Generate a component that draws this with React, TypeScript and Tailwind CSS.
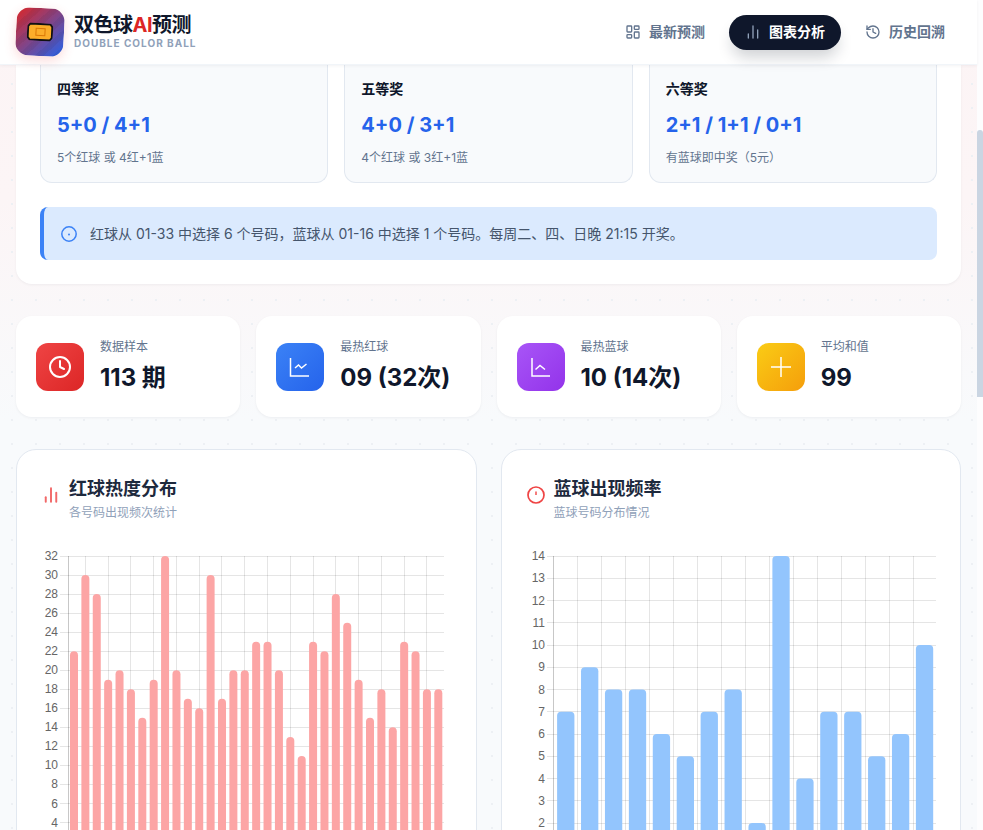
import { ChartNoAxesColumn, Clock, History, LayoutDashboard } from "lucide-react";

const FONT = "font-['Inter','Noto_Sans_CJK_SC',sans-serif]";

const redCounts = [22, 30, 28, 19, 20, 18, 15, 19, 32, 20, 17, 16, 30, 17, 20, 20, 23, 23, 20, 13, 11, 23, 22, 28, 25, 19, 15, 18, 14, 23, 22, 18, 18];
const blueCounts = [7, 9, 8, 8, 6, 5, 7, 8, 2, 14, 4, 7, 7, 5, 6, 10];

const prizes = [
	{ name: "四等奖", rule: "5+0 / 4+1", note: "5个红球 或 4红+1蓝" },
	{ name: "五等奖", rule: "4+0 / 3+1", note: "4个红球 或 3红+1蓝" },
	{ name: "六等奖", rule: "2+1 / 1+1 / 0+1", note: "有蓝球即中奖（5元）" },
];

type ChartProps = {
	counts: number[];
	color: string;
	left: number;
	right: number;
	barWidth: number;
	ticks: number[];
	max: number;
	unit: number;
	tickLeft: number;
	vLines: number[];
};

function BarChart({ counts, color, left, right, barWidth, ticks, max, unit, tickLeft, vLines }: ChartProps) {
	const top = 12;
	const slot = (right - left) / counts.length;
	const bottom = 340;
	const yOf = (v: number) => top + (max - v) * unit;
	return (
		<svg width="100%" height="330" className="block">
			{ticks.map((t) => (
				<g key={t}>
					<line x1={tickLeft} x2={right} y1={yOf(t)} y2={yOf(t)} stroke="rgba(0,0,0,0.1)" shapeRendering="crispEdges" />
					<text x={tickLeft - 2} y={yOf(t) + 4} textAnchor="end" fontSize="12" fill="#666" fontFamily="'Liberation Sans', Arial, sans-serif">
						{t}
					</text>
				</g>
			))}
			<line x1={left} x2={left} y1={top} y2={bottom} stroke="rgba(0,0,0,0.22)" shapeRendering="crispEdges" />
			{vLines.map((x) => (
				<line key={x} x1={x} x2={x} y1={top} y2={bottom} stroke="rgba(0,0,0,0.1)" shapeRendering="crispEdges" />
			))}
			{counts.map((v, i) => {
				const x = left + slot * i + (slot - barWidth) / 2;
				const y = yOf(v);
				const r = 4;
				return (
					<path
						key={i}
						d={`M${x} ${bottom}V${y + r}Q${x} ${y} ${x + r} ${y}H${x + barWidth - r}Q${x + barWidth} ${y} ${x + barWidth} ${y + r}V${bottom}Z`}
						fill={color}
					/>
				);
			})}
		</svg>
	);
}

function Stat({ label, value, box, icon }: { label: string; value: string; box: string; icon: React.ReactNode }) {
	return (
		<div className="flex items-center gap-4 rounded-2xl bg-white px-5 py-[21px] shadow-[0_1px_3px_rgba(15,23,42,0.05)]">
			<div className={`flex h-12 w-12 shrink-0 items-center justify-center rounded-xl ${box}`}>{icon}</div>
			<div className="mt-[2px]">
				<p className="text-xs leading-4 text-slate-500">{label}</p>
				<p className="mt-1 text-2xl leading-[37px] font-bold text-slate-900">{value}</p>
			</div>
		</div>
	);
}

function NavItem({ label, icon, active }: { label: string; icon: React.ReactNode; active?: boolean }) {
	return (
		<div
			className={
				active
					? "flex h-[35px] items-center gap-2 rounded-full bg-slate-900 px-4 text-sm font-bold text-white shadow-[0_10px_15px_-3px_rgba(15,23,42,0.2)]"
					: "flex h-[35px] items-center gap-2 rounded-full px-4 text-sm font-semibold text-slate-500"
			}
		>
			{icon}
			{label}
		</div>
	);
}

export default function App() {
	const leftLines = Array.from({ length: 16 }, (_, i) => 44.4 + 22.76 * i);
	const rightLines = Array.from({ length: 15 }, (_, i) => 51.8 + 24 * i);
	return (
		<div className={`flex h-[830px] overflow-hidden bg-white ${FONT}`}>
			<div className="flex min-w-0 flex-1 flex-col bg-[#f8fafc] [background-image:radial-gradient(#edf0f4_1px,transparent_1px),linear-gradient(180deg,#fcf4f5_0px,#fcf5f6_200px,#f8fafc_420px)] [background-size:24px_24px,100%_100%]">
				<header className="relative z-10 flex h-[65px] shrink-0 items-center justify-between border-b border-slate-100 bg-white px-4 shadow-[0_1px_3px_rgba(15,23,42,0.05)]">
					<div className="flex items-center gap-2.5">
						<div className="flex h-12 w-12 rotate-3 items-center justify-center rounded-[13px] shadow-[0_4px_12px_rgba(239,68,68,0.2)] [background-image:repeating-linear-gradient(135deg,rgba(0,0,0,0.05)_0px,rgba(0,0,0,0.05)_6px,transparent_6px,transparent_12px),linear-gradient(135deg,#dc2626,#2563eb)]">
							<svg width="26" height="18" viewBox="0 0 26 18">
								<path d="M3 1h20l2 2.500v11l-2 2.500H3l-2-2.500v-11Z" fill="#fbad2a" stroke="#111" strokeWidth="1.800" strokeLinejoin="round" />
								<rect x="9" y="5.500" width="9" height="7" fill="none" stroke="#d97706" strokeWidth="1" />
							</svg>
						</div>
						<div className="mb-[3px]">
							<p className="text-xl leading-6 font-bold tracking-tight text-slate-900">
								双色球<span className="text-[#dc2626]">AI</span>预测
							</p>
							<p className="text-[10px] leading-3 font-bold tracking-[0.1em] text-slate-400">DOUBLE COLOR BALL</p>
						</div>
					</div>
					<nav className="flex items-center gap-2">
						<NavItem label="最新预测" icon={<LayoutDashboard size={16} />} />
						<NavItem label="图表分析" active icon={<ChartNoAxesColumn size={16} className="text-slate-400" />} />
						<NavItem label="历史回溯" icon={<History size={16} />} />
					</nav>
				</header>

				<main className="min-h-0 flex-1 overflow-hidden px-4">
					<section className="rounded-b-2xl bg-white px-6 pb-6 shadow-[0_1px_3px_rgba(15,23,42,0.05)]">
						<div className="grid grid-cols-3 gap-4">
							{prizes.map((p) => (
								<div key={p.name} className="rounded-b-xl border-x border-b border-slate-200 bg-[#f8fafc] px-4 pt-3.5 pb-4">
									<p className="text-sm leading-5 font-bold text-slate-900">{p.name}</p>
									<p className="mt-3 text-xl leading-7 font-bold text-[#2563eb]">{p.rule}</p>
									<p className="mt-[11px] text-xs leading-4 text-slate-500">{p.note}</p>
								</div>
							))}
						</div>
						<div className="mt-6 flex h-[53px] items-center gap-3 rounded-lg border-l-4 border-[#3b82f6] bg-[#dbeafe] pl-[17px]">
							<svg width="16" height="16" viewBox="0 0 16 16" fill="none" className="shrink-0 text-[#3b82f6]">
								<circle cx="8" cy="8" r="7.200" stroke="currentColor" strokeWidth="1.500" />
								<circle cx="8" cy="8.500" r="1" fill="currentColor" />
							</svg>
							<p className="ml-[1px] text-sm text-slate-600">红球从 01-33 中选择 6 个号码，蓝球从 01-16 中选择 1 个号码。每周二、四、日晚 21:15 开奖。</p>
						</div>
					</section>

					<section className="mt-8 grid grid-cols-4 gap-4">
						<Stat label="数据样本" value="113 期" box="bg-[linear-gradient(135deg,#ef4444,#dc2626)]" icon={<Clock size={24} color="white" />} />
						<Stat
							label="最热红球"
							value="09 (32次)"
							box="bg-[linear-gradient(135deg,#3b82f6,#2563eb)]"
							icon={
								<svg width="24" height="24" viewBox="0 0 24 24" fill="none" stroke="white" strokeWidth="1.500">
									<path d="M2.500 3v18h18.500" />
									<path d="M7 13l3.500-3 3 3 5-4" />
								</svg>
							}
						/>
						<Stat
							label="最热蓝球"
							value="10 (14次)"
							box="bg-[linear-gradient(135deg,#a855f7,#9333ea)]"
							icon={
								<svg width="24" height="24" viewBox="0 0 24 24" fill="none" stroke="white" strokeWidth="1.500">
									<path d="M3 3v18h18" />
									<path d="M6.500 14.500l4.500-4 5 4" />
								</svg>
							}
						/>
						<Stat
							label="平均和值"
							value="99"
							box="bg-[linear-gradient(135deg,#facc15,#f59e0b)]"
							icon={
								<svg width="24" height="24" viewBox="0 0 24 24" fill="none" stroke="white" strokeWidth="1.500">
									<path d="M12 2v20M2 12h20" />
								</svg>
							}
						/>
					</section>

					<section className="mt-8 grid grid-cols-2 gap-6">
						<div className="rounded-[20px] border border-slate-200 bg-white px-6 pt-[25px]">
							<div className="flex items-center gap-[9px]">
								<ChartNoAxesColumn size={18} strokeWidth={2.6} className="mb-1.5 ml-[1px] text-[#ef4444] opacity-80" />
								<div>
									<h2 className="text-lg leading-7 font-bold text-slate-800">红球热度分布</h2>
									<p className="mt-0.5 text-xs leading-4 text-slate-400">各号码出现频次统计</p>
								</div>
							</div>
							<div className="mt-[23px]">
								<BarChart
									counts={redCounts}
									color="#fca5a5"
									left={27.3}
									right={403}
									barWidth={8}
									ticks={[32, 30, 28, 26, 24, 22, 20, 18, 16, 14, 12, 10, 8, 6, 4]}
									max={32}
									unit={9.52}
									tickLeft={19}
									vLines={leftLines}
								/>
							</div>
						</div>
						<div className="rounded-[20px] border border-slate-200 bg-white px-6 pt-[25px]">
							<div className="flex items-center gap-[8px]">
								<svg width="20" height="20" viewBox="0 0 20 20" fill="none" className="mb-1.5 shrink-0">
									<circle cx="10" cy="10" r="8" stroke="#ef4444" strokeWidth="1.700" />
									<path d="M10 6.500v3.500" stroke="#ef4444" strokeWidth="1.400" />
								</svg>
								<div>
									<h2 className="text-lg leading-7 font-bold text-slate-800">蓝球出现频率</h2>
									<p className="mt-0.5 text-xs leading-4 text-slate-400">蓝球号码分布情况</p>
								</div>
							</div>
							<div className="mt-[23px]">
								<BarChart
									counts={blueCounts}
									color="#93c5fd"
									left={27.8}
									right={410.5}
									barWidth={17.300}
									ticks={[14, 13, 12, 11, 10, 9, 8, 7, 6, 5, 4, 3, 2]}
									max={14}
									unit={22.25}
									tickLeft={21}
									vLines={rightLines}
								/>
							</div>
						</div>
					</section>
				</main>
			</div>
			<div className="w-1.5 shrink-0 bg-[#fdfdfe]">
				<div className="mt-[130px] h-[267px] rounded-t-[3px] bg-slate-300" />
			</div>
		</div>
	);
}
